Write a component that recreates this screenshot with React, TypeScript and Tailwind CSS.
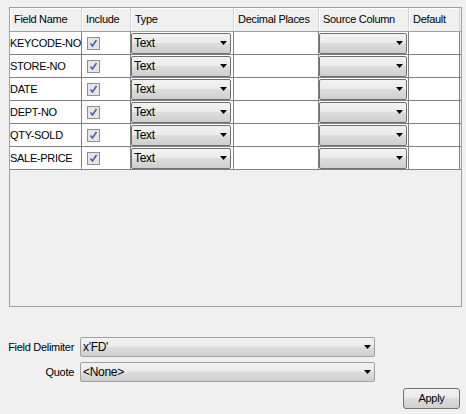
import React from "react";

const rows = ["KEYCODE-NO", "STORE-NO", "DATE", "DEPT-NO", "QTY-SOLD", "SALE-PRICE"];

function Arrow() {
  return (
    <svg width="7" height="4" viewBox="0 0 7 4" className="shrink-0">
      <path d="M0 0H7L3.5 4Z" fill="#000" />
    </svg>
  );
}

function Combo({ text, className }: { text?: string; className?: string }) {
  return (
    <div
      className={
        "flex items-center justify-between rounded-[2px] border bg-[linear-gradient(#f2f2f2_0%,#ebebeb_45%,#dddddd_50%,#cfcfcf_100%)] pl-[2px] pr-[3px] " +
        (className || "")
      }
    >
      <span className="whitespace-nowrap text-[12px] leading-none tracking-[-0.3px] text-black">{text}</span>
      <Arrow />
    </div>
  );
}

function Check() {
  return (
    <div className="flex h-[13px] w-[13px] items-center justify-center border border-[#8f8f8f] bg-[#e6e6e6]">
      <svg width="9" height="9" viewBox="0 0 9 9">
        <path d="M1.5 4.5L3.5 7L7.5 1" stroke="#4a5fa8" strokeWidth="1.6" fill="none" />
      </svg>
    </div>
  );
}

const cols = ["w-[72px]", "w-[49px]", "w-[103px]", "w-[85px]", "w-[90px]", "w-[51px]"];
const heads = ["Field Name", "Include", "Type", "Decimal Places", "Source Column", "Default"];

export default function App() {
  return (
    <div
      className="h-[414px] w-[466px] bg-[#f0f0f0] text-[11px] tracking-[-0.3px] text-black"
      style={{ fontFamily: "Tahoma, 'Liberation Sans', Arial, sans-serif" }}
    >
      <div className="pl-[9px] pt-[7px]">
        <div className="h-[300px] w-[453px] border border-[#a0a0a0] bg-[#f0f0f0]">
          {/* header */}
          <div className="flex h-[24px] border-b border-[#a0a0a0] bg-[#f0f0f0]">
            {heads.map((h, i) => (
              <div
                key={h}
                className={`${cols[i]} flex items-center whitespace-nowrap border-r border-[#d5d5d5] pl-[4px] shadow-[inset_1px_1px_0_#fff]`}
              >
                {h}
              </div>
            ))}
          </div>
          {rows.map((r) => (
            <div key={r} className="flex h-[23px] border-b border-[#808080]">
              <div className={`${cols[0]} flex items-center overflow-hidden whitespace-nowrap border-r border-[#808080] bg-white`}>
                {r}
              </div>
              <div className={`${cols[1]} flex items-center border-r border-[#808080] bg-white pl-[5px]`}>
                <Check />
              </div>
              <div className={`${cols[2]} flex items-center border-r border-[#808080] bg-white pr-[2px]`}>
                <Combo text="Text" className="h-[21px] w-full border-[#707070]" />
              </div>
              <div className={`${cols[3]} border-r border-[#808080] bg-white`} />
              <div className={`${cols[4]} flex items-center border-r border-[#808080] bg-white pr-[1px]`}>
                <Combo className="h-[21px] w-full border-[#707070]" />
              </div>
              <div className={`${cols[5]} border-r border-[#808080] bg-white`} />
            </div>
          ))}
        </div>
      </div>

      <div className="mt-[30px] flex flex-col gap-[5px]">
        <div className="flex items-center">
          <div className="w-[74px] whitespace-nowrap text-right">Field Delimiter</div>
          <Combo text="x'FD'" className="ml-[6px] h-[20px] w-[295px] border-[#a0a0a0]" />
        </div>
        <div className="flex items-center">
          <div className="w-[74px] text-right">Quote</div>
          <Combo text="<None>" className="ml-[6px] h-[20px] w-[295px] border-[#a0a0a0]" />
        </div>
      </div>

      <div className="mt-[6px] flex justify-end pr-[6px]">
        <button className="h-[21px] w-[57px] rounded-[3px] border border-[#707070] bg-[linear-gradient(#f2f2f2_0%,#ebebeb_45%,#dddddd_50%,#cfcfcf_100%)] text-[11px] text-black">
          Apply
        </button>
      </div>
    </div>
  );
}
